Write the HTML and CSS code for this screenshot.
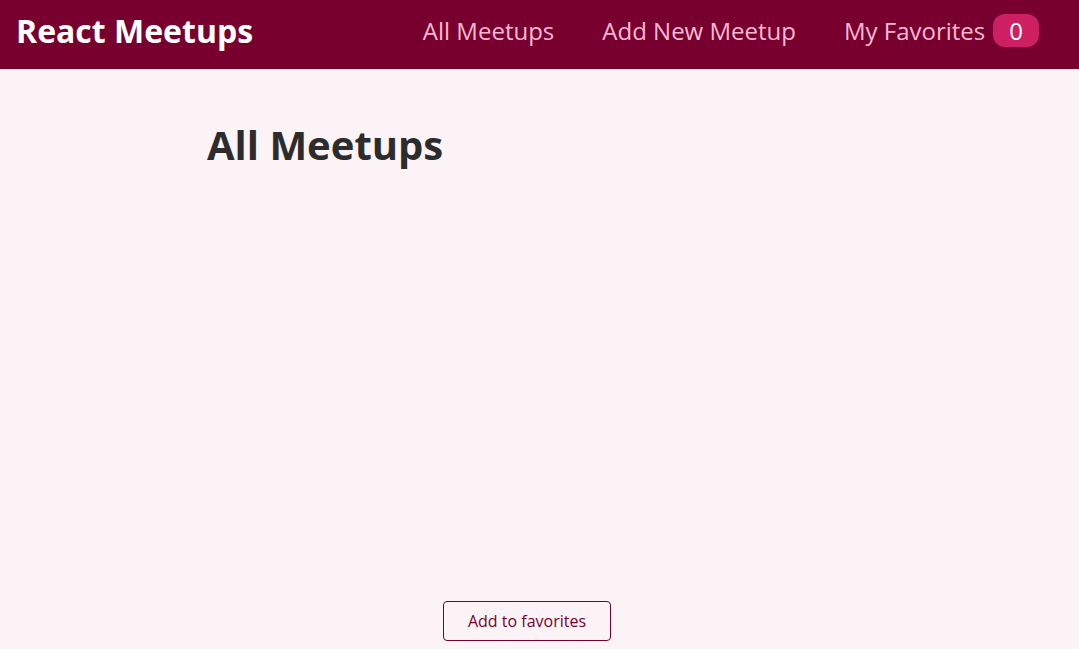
FILE: index.html
```html
<!DOCTYPE html>
<html lang="en">
<head>
<meta charset="utf-8">
<title>React Meetups</title>
<link rel="stylesheet" href="styles.css">
</head>
<body>
<header class="header">
  <div class="logo">React Meetups</div>
  <nav>
    <ul class="nav-list">
      <li><a href="#">All Meetups</a></li>
      <li><a href="#">Add New Meetup</a></li>
      <li><a href="#">My Favorites<span class="badge">0</span></a></li>
    </ul>
  </nav>
</header>
<main class="main">
  <h1 class="title">All Meetups</h1>
  <div class="card-area"></div>
  <div class="actions">
    <button class="btn">Add to favorites</button>
  </div>
</main>
</body>
</html>
```
FILE: styles.css
```css
* { box-sizing: border-box; }
html, body { margin: 0; padding: 0; }
body {
  background-color: #fcf3f6;
  font-family: "Open Sans", "Noto Sans", sans-serif;
  color: #2c2c2c;
  height: 649px;
  overflow: hidden;
}
.header {
  height: 69px;
  display: flex;
  align-items: center;
  justify-content: space-between;
  background-color: #77002e;
  padding: 0 40px 8px 16px;
}
.logo {
  color: #ffffff;
  font-weight: 700;
  font-size: 32px;
}
.nav-list {
  list-style: none;
  margin: 0;
  padding: 0;
  display: flex;
  align-items: baseline;
}
.nav-list li { margin-left: 48px; }
.nav-list a {
  text-decoration: none;
  font-size: 24px;
  color: #fcb8d2;
}
.badge {
  background-color: #cc2062;
  color: #ffffff;
  border-radius: 12px;
  padding: 0 16px;
  margin-left: 8px;
}
.main {
  width: 640px;
  margin-left: 207px;
}
.title {
  margin: 48px 0 0;
  font-size: 40px;
  font-weight: 700;
}
.card-area { height: 429px; }
.actions { text-align: center; }
.btn {
  font: inherit;
  font-size: 16px;
  cursor: pointer;
  color: #77002e;
  border: 1px solid #77002e;
  background-color: transparent;
  padding: 8px 24px;
  border-radius: 4px;
}
```
